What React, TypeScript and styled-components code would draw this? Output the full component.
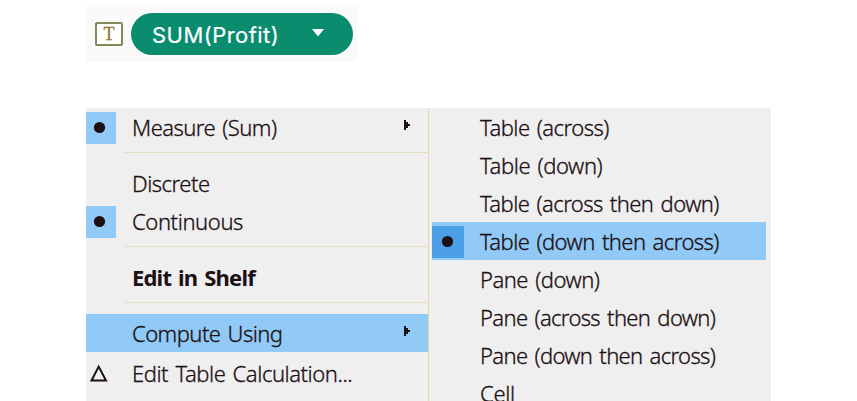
import React from 'react';
import styled, { createGlobalStyle } from 'styled-components';

const GlobalStyle = createGlobalStyle`
  * { box-sizing: border-box; }
  html, body { margin: 0; padding: 0; background: #fff; overflow: hidden; }
`;

const Page = styled.main`
  width: 857px;
  height: 401px;
  overflow: hidden;
  padding: 5px 0 0 86px;
  background: #fff;
  color: #1c1014;
  font-family: 'Noto Sans', 'Open Sans', sans-serif;
`;

const Shelf = styled.div`
  display: flex;
  width: 271px;
  height: 57px;
  padding: 8px 0 0 9px;
  background: #fafafa;
`;

const TextMark = styled.svg`
  flex: none;
  width: 28px;
  height: 24px;
  margin-top: 9px;
`;

const Pill = styled.div`
  display: flex;
  justify-content: space-between;
  width: 222px;
  height: 42px;
  margin-left: 8px;
  padding: 0 28px 0 21px;
  border-radius: 21px;
  background: #0a8c6e;
  color: #fff;
`;

const PillLabel = styled.span`
  font: 400 22px/44px Inter, sans-serif;
  letter-spacing: 0.45px;
  -webkit-text-stroke: 0.2px #fff;
  white-space: nowrap;
`;

const PillCaret = styled.svg`
  width: 14px;
  height: 8px;
  margin-top: 16px;
`;

const Menus = styled.div`
  display: flex;
  width: 685px;
  height: 293px;
  margin-top: 46px;
  overflow: hidden;
  background: #efefef;
`;

const MainMenu = styled.div`
  flex: none;
  width: 343px;
  border-right: 1px solid #e4d9a4;
`;

const SubMenu = styled.div`
  flex: 1;
  padding: 0 5px 0 3px;
`;

const Row = styled.div<{ $active?: boolean; $gap?: number }>`
  display: flex;
  height: 38px;
  margin-top: ${(p) => p.$gap ?? 0}px;
  background: ${(p) => (p.$active ? '#91c9f7' : 'transparent')};
`;

const Gutter = styled.div<{ $width: number; $fill?: string }>`
  flex: none;
  width: ${(p) => p.$width}px;
  height: 32px;
  margin-top: 4px;
  background: ${(p) => p.$fill ?? 'transparent'};
  svg { display: block; }
`;

const Label = styled.span<{ $indent: number; $bold?: boolean; $track: number }>`
  flex: 1;
  margin-left: ${(p) => p.$indent}px;
  font-size: 22px;
  font-weight: ${(p) => (p.$bold ? 700 : 350)};
  -webkit-text-stroke: ${(p) => (p.$bold ? '0' : '0.3px #1c1014')};
  line-height: 39px;
  letter-spacing: ${(p) => p.$track}px;
  word-spacing: 2px;
  white-space: nowrap;
`;

const Arrow = styled.svg`
  flex: none;
  width: 6px;
  height: 10px;
  margin: 12px 18px 0 0;
`;

const Separator = styled.div`
  height: 18px;
  padding: 6px 1px 0 38px;
  &::before {
    content: '';
    display: block;
    height: 1px;
    background: repeating-linear-gradient(90deg, #e4d9a4 0 3px, #efefef 3px 4px);
  }
`;

const Dot = ({ x }: { x: number }) => (
  <svg width="30" height="32">
    <circle cx={x} cy="15.5" r="5.6" fill="#1c1014" />
  </svg>
);

const Delta = () => (
  <svg width="30" height="32">
    <path d="M12.7 8.6 L20 22.5 H5.5 Z" fill="none" stroke="#1c1014" strokeWidth="2" />
  </svg>
);

interface ItemProps {
  text: string;
  track: number;
  checked?: boolean;
  delta?: boolean;
  bold?: boolean;
  active?: boolean;
  arrow?: boolean;
  gap?: number;
}

const MainItem = ({ text, track, checked, delta, bold, active, arrow, gap }: ItemProps) => (
  <Row $active={active} $gap={gap}>
    <Gutter $width={30} $fill={checked ? '#91c9f7' : undefined}>
      {checked && <Dot x={13.5} />}
      {delta && <Delta />}
    </Gutter>
    <Label $indent={16} $bold={bold} $track={track}>{text}</Label>
    {arrow && (
      <Arrow viewBox="0 0 6 10">
        <path d="M0 0H2V2H4V4H6V6H4V8H2V10H0Z" fill="#1c1014" />
      </Arrow>
    )}
  </Row>
);

const subItems: ItemProps[] = [
  { text: 'Table (across)', track: -0.53 },
  { text: 'Table (down)', track: -0.4 },
  { text: 'Table (across then down)', track: -0.57 },
  { text: 'Table (down then across)', track: -0.57, checked: true, active: true },
  { text: 'Pane (down)', track: -0.5 },
  { text: 'Pane (across then down)', track: -0.66 },
  { text: 'Pane (down then across)', track: -0.66 },
  { text: 'Cell', track: -0.3 },
];

export default function App() {
  return (
    <Page>
      <GlobalStyle />
      <Shelf>
        <TextMark viewBox="0 0 28 24">
          <defs>
            <pattern id="weave" width="2" height="2" patternUnits="userSpaceOnUse">
              <rect width="2" height="2" fill="#258c6c" />
              <rect width="1" height="1" fill="#d98a48" />
              <rect x="1" y="1" width="1" height="1" fill="#d98a48" />
            </pattern>
          </defs>
          <rect x="1" y="1" width="26" height="22" rx="1" fill="#fff" stroke="url(#weave)" strokeWidth="2" />
          <text x="14" y="18" textAnchor="middle" fontFamily="Liberation Serif, serif" fontSize="18" fill="#94743a" stroke="#94743a" strokeWidth=".3">T</text>
        </TextMark>
        <Pill>
          <PillLabel>SUM(Profit)</PillLabel>
          <PillCaret viewBox="0 0 14 8"><path d="M1 0H13L7 7.5Z" fill="#fff" /></PillCaret>
        </Pill>
      </Shelf>
      <Menus>
        <MainMenu>
          <MainItem text="Measure (Sum)" track={-0.55} checked arrow />
          <Separator />
          <MainItem text="Discrete" track={-0.5} />
          <MainItem text="Continuous" track={-0.4} checked />
          <Separator />
          <MainItem text="Edit in Shelf" track={-0.8} bold />
          <Separator />
          <MainItem text="Compute Using" track={-0.55} active arrow />
          <MainItem text="Edit Table Calculation..." track={-0.45} delta gap={2} />
        </MainMenu>
        <SubMenu>
          {subItems.map((item) => (
            <Row key={item.text} $active={item.active}>
              <Gutter $width={32} $fill={item.checked ? '#4ba0e8' : undefined}>
                {item.checked && <Dot x={15.5} />}
              </Gutter>
              <Label $indent={16} $track={item.track}>{item.text}</Label>
            </Row>
          ))}
        </SubMenu>
      </Menus>
    </Page>
  );
}
